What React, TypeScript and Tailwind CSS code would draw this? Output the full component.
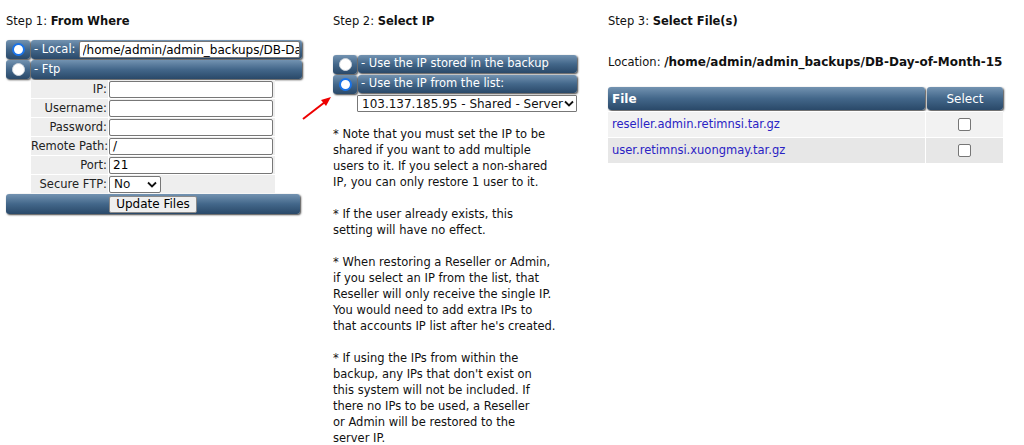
import React from "react";

const bar =
  "bg-gradient-to-b from-[#7393b1] via-[#43678a] to-[#2a4969] rounded-[3px] shadow-[1px_1px_2px_rgba(0,0,0,0.75)]";

function Radio({ checked }: { checked?: boolean }) {
  return (
    <div className={`${bar} w-[24px] h-[19px] flex items-center justify-center shrink-0`}>
      {checked ? (
        <div className="w-[13px] h-[13px] rounded-full border-[2px] border-[#1a73e8] bg-white" />
      ) : (
        <div className="w-[13px] h-[13px] rounded-full bg-white border border-[#cfd6dd]" />
      )}
    </div>
  );
}

function Chevron() {
  return (
    <svg width="10" height="7" viewBox="0 0 10 7" className="shrink-0">
      <path d="M1 1.5 L5 5.5 L9 1.5" fill="none" stroke="#111" strokeWidth="1.8" />
    </svg>
  );
}

const ftpRows: [string, string][] = [
  ["IP:", ""],
  ["Username:", ""],
  ["Password:", ""],
  ["Remote Path:", "/"],
  ["Port:", "21"],
];

const notes = [
  [
    "* Note that you must set the IP to be",
    "shared if you want to add multiple",
    "users to it. If you select a non-shared",
    "IP, you can only restore 1 user to it.",
  ],
  ["* If the user already exists, this", "setting will have no effect."],
  [
    "* When restoring a Reseller or Admin,",
    "if you select an IP from the list, that",
    "Reseller will only receive the single IP.",
    "You would need to add extra IPs to",
    "that accounts IP list after he's created.",
  ],
  [
    "* If using the IPs from within the",
    "backup, any IPs that don't exist on",
    "this system will not be included. If",
    "there no IPs to be used, a Reseller",
    "or Admin will be restored to the",
    "server IP.",
  ],
];

const files = ["reseller.admin.retimnsi.tar.gz", "user.retimnsi.xuongmay.tar.gz"];

export default function App() {
  return (
    <div className="relative w-[1024px] h-[445px] overflow-hidden bg-white font-['DejaVu_Sans',Verdana,sans-serif] text-[11.5px] text-[#111]">
      <div className="flex pl-[5px] pt-[13px]">
        {/* step 1 */}
        <div className="w-[297px] shrink-0">
          <div className="h-[16px] leading-[16px] pl-[1px]">
            Step 1: <b>From Where</b>
          </div>
          <div className="mt-[11px] pl-[1px] flex flex-col gap-[1px]">
            <div className="flex gap-[1px]">
              <Radio checked />
              <div className={`${bar} flex-1 min-w-0 h-[19px] flex items-center gap-[3px] pl-[3px] pr-[2px] text-white`}>
                <span className="whitespace-nowrap">- Local:</span>
                <input
                  readOnly
                  value="/home/admin/admin_backups/DB-Day-of-Month-15"
                  className="flex-1 min-w-0 h-[17px] bg-white border border-[#777] rounded-[2px] text-[12px] text-black leading-[15px] pl-[3px] outline-none font-['DejaVu_Sans',sans-serif]"
                />
              </div>
            </div>
            <div className="flex gap-[1px]">
              <Radio />
              <div className={`${bar} flex-1 h-[19px] flex items-center pl-[3px] text-white`}>- Ftp</div>
            </div>
            <div className="ml-[25px] w-[244px] flex flex-col gap-[1px] bg-white">
              {ftpRows.map(([label, value]) => (
                <div key={label} className="flex gap-[1px] h-[18px]">
                  <div className="w-[77px] bg-[#eeeeee] text-right text-[#222] leading-[18px] pr-[1px] whitespace-nowrap">{label}</div>
                  <div className="flex-1 bg-[#eeeeee] flex items-center">
                    <div className="w-[164px] h-[17px] bg-white border border-[#777] rounded-[2px] text-[12px] text-black leading-[15px] pl-[3px]">
                      {value}
                    </div>
                  </div>
                </div>
              ))}
              <div className="flex gap-[1px] h-[18px]">
                <div className="w-[77px] bg-[#eeeeee] text-right text-[#222] leading-[18px] pr-[1px] whitespace-nowrap">Secure FTP:</div>
                <div className="flex-1 bg-[#eeeeee] flex items-center">
                  <div className="w-[52px] h-[17px] bg-white border border-[#777] rounded-[2px] text-[12px] leading-[15px] pl-[4px] pr-[3px] flex items-center justify-between">
                    <span>No</span>
                    <Chevron />
                  </div>
                </div>
              </div>
            </div>
            <div className={`${bar} h-[20px] w-[294px] flex items-center justify-center`}>
              <div className="h-[17px] px-[6px] bg-[#efefef] border border-[#8a8a8a] rounded-[2px] text-[12px] leading-[15px] text-black">
                Update Files
              </div>
            </div>
          </div>
        </div>

        {/* step 2 */}
        <div className="ml-[31px] w-[244px] shrink-0">
          <div className="h-[16px] leading-[16px]">
            Step 2: <b>Select IP</b>
          </div>
          <div className="mt-[26px] flex flex-col gap-[1px]">
            <div className="flex gap-[1px]">
              <Radio />
              <div className={`${bar} flex-1 h-[18px] flex items-center pl-[3px] text-white`}>
                - Use the IP stored in the backup
              </div>
            </div>
            <div className="flex gap-[1px]">
              <Radio checked />
              <div className={`${bar} flex-1 h-[18px] flex items-center pl-[3px] text-white`}>
                - Use the IP from the list:
              </div>
            </div>
            <div className="ml-[24px] w-[220px] h-[17px] border border-[#777] bg-white rounded-[1px] flex items-center justify-between pl-[4px] pr-[2px] text-[12px] whitespace-nowrap">
              <span>103.137.185.95 - Shared - Server</span>
              <Chevron />
            </div>
          </div>
          <div className="mt-[14px] leading-[16px] text-[#111] flex flex-col gap-[16px] whitespace-nowrap">
            {notes.map((p, i) => (
              <div key={i}>
                {p.map((l) => (
                  <div key={l}>{l}</div>
                ))}
              </div>
            ))}
          </div>
        </div>

        {/* step 3 */}
        <div className="ml-[31px] w-[395px] shrink-0">
          <div className="h-[16px] leading-[16px]">
            Step 3: <b>Select File(s)</b>
          </div>
          <div className="mt-[25px] h-[16px] leading-[16px] whitespace-nowrap">
            Location: <b className="text-[12px]">/home/admin/admin_backups/DB-Day-of-Month-15</b>
          </div>
          <div className="mt-[17px] flex flex-col">
            <div className="flex gap-[2px] h-[24px] pb-[1px]">
              <div className={`${bar} flex-1 flex items-center pl-[4px] text-white font-bold text-[12px]`}>File</div>
              <div className={`${bar} w-[76px] flex items-center justify-center text-white text-[12px]`}>Select</div>
            </div>
            {files.map((f, i) => (
              <div key={f} className={`flex h-[26px] border-t border-white ${i === 0 ? "bg-[#f2f2f2]" : "bg-[#e7e7e7]"}`}>
                <div className="flex-1 flex items-center pl-[4px] text-[#2a22c4]">{f}</div>
                <div className="w-[78px] border-l border-white flex items-center justify-center">
                  <div className="w-[13px] h-[13px] bg-white border border-[#767676] rounded-[2px]" />
                </div>
              </div>
            ))}
          </div>
        </div>
      </div>

      <svg className="absolute left-[300px] top-[94px]" width="36" height="28" viewBox="0 0 36 28">
        <line x1="3" y1="25" x2="25" y2="8" stroke="#e00" strokeWidth="2" />
        <polygon points="31,3 21,6 26,12" fill="#e00" />
      </svg>
    </div>
  );
}
